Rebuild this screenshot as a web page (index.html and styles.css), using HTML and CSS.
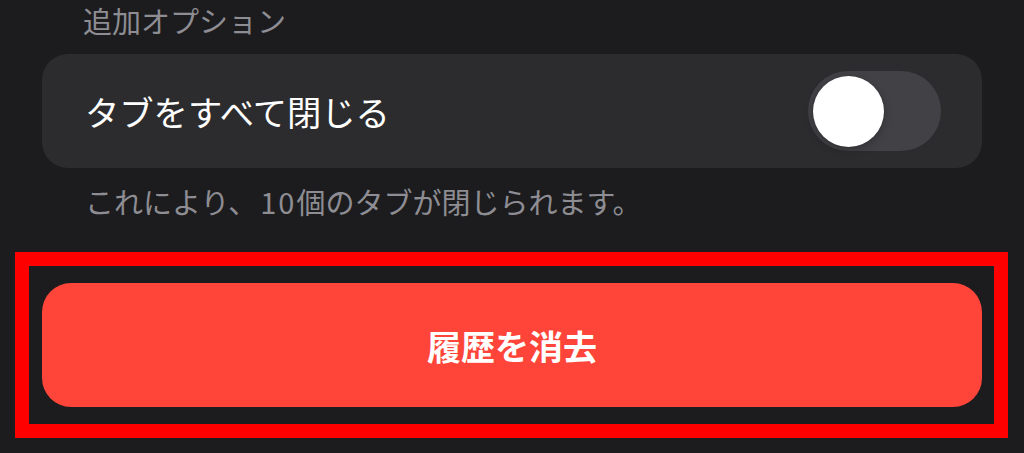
FILE: index.html
```html
<!DOCTYPE html>
<html lang="ja">
<head>
<meta charset="utf-8">
<link rel="stylesheet" href="styles.css">
</head>
<body>
<main class="page">
  <h2 class="section-header">追加オプション</h2>
  <div class="card">
    <span class="row-title">タブをすべて閉じる</span>
    <div class="toggle" role="switch" aria-checked="false"><span class="knob"></span></div>
  </div>
  <p class="footer-note">これにより、<span class="num">10</span>個のタブが閉じられます。</p>
  <div class="highlight">
    <button class="danger-btn">履歴を消去</button>
  </div>
</main>
</body>
</html>
```
FILE: styles.css
```css
html, body {
  margin: 0;
  padding: 0;
  background: #1c1c1e;
}
body {
  width: 1024px;
  height: 453px;
  overflow: hidden;
  font-family: "Noto Sans CJK JP", "Noto Sans", sans-serif;
}
.page {
  padding: 0 42px;
  display: flex;
  flex-direction: column;
}
.section-header {
  margin: 0 0 13px 0;
  padding-left: 41px;
  height: 41px;
  line-height: 40px;
  font-size: 29px;
  font-weight: 400;
  color: #8d8d93;
}
.card {
  height: 114px;
  background: #2c2c2e;
  border-radius: 26px;
  display: flex;
  align-items: center;
  justify-content: space-between;
  padding: 0 41px 0 43px;
}
.row-title {
  font-size: 34.3px;
  color: #ffffff;
  line-height: 1;
}
.toggle {
  width: 133px;
  height: 80px;
  border-radius: 40px;
  background: #424246;
  display: flex;
  align-items: center;
  padding-left: 5px;
  box-sizing: border-box;
}
.knob {
  width: 71px;
  height: 71px;
  border-radius: 50%;
  background: #ffffff;
  box-shadow: 0 3px 8px rgba(0,0,0,0.25), 0 0 0 1px rgba(0,0,0,0.04);
}
.footer-note {
  margin: 13px 0 31px 0;
  padding-left: 43px;
  height: 40px;
  line-height: 40px;
  font-size: 29px;
  color: #8d8d93;
}
.num {
  letter-spacing: 2px;
  padding-left: 3px;
}
.highlight {
  margin: 0 -26px 0 -27px;
  border: 14px solid #ff0000;
  padding: 17px 12px 17px 13px;
  height: 124px;
  box-sizing: content-box;
}
.danger-btn {
  width: 100%;
  height: 124px;
  border: none;
  border-radius: 29px;
  background: #ff453a;
  color: #ffffff;
  font-family: "Noto Sans CJK JP", "Noto Sans", sans-serif;
  font-size: 34px;
  font-weight: 700;
  display: flex;
  align-items: center;
  justify-content: center;
  padding: 0;
}
```
